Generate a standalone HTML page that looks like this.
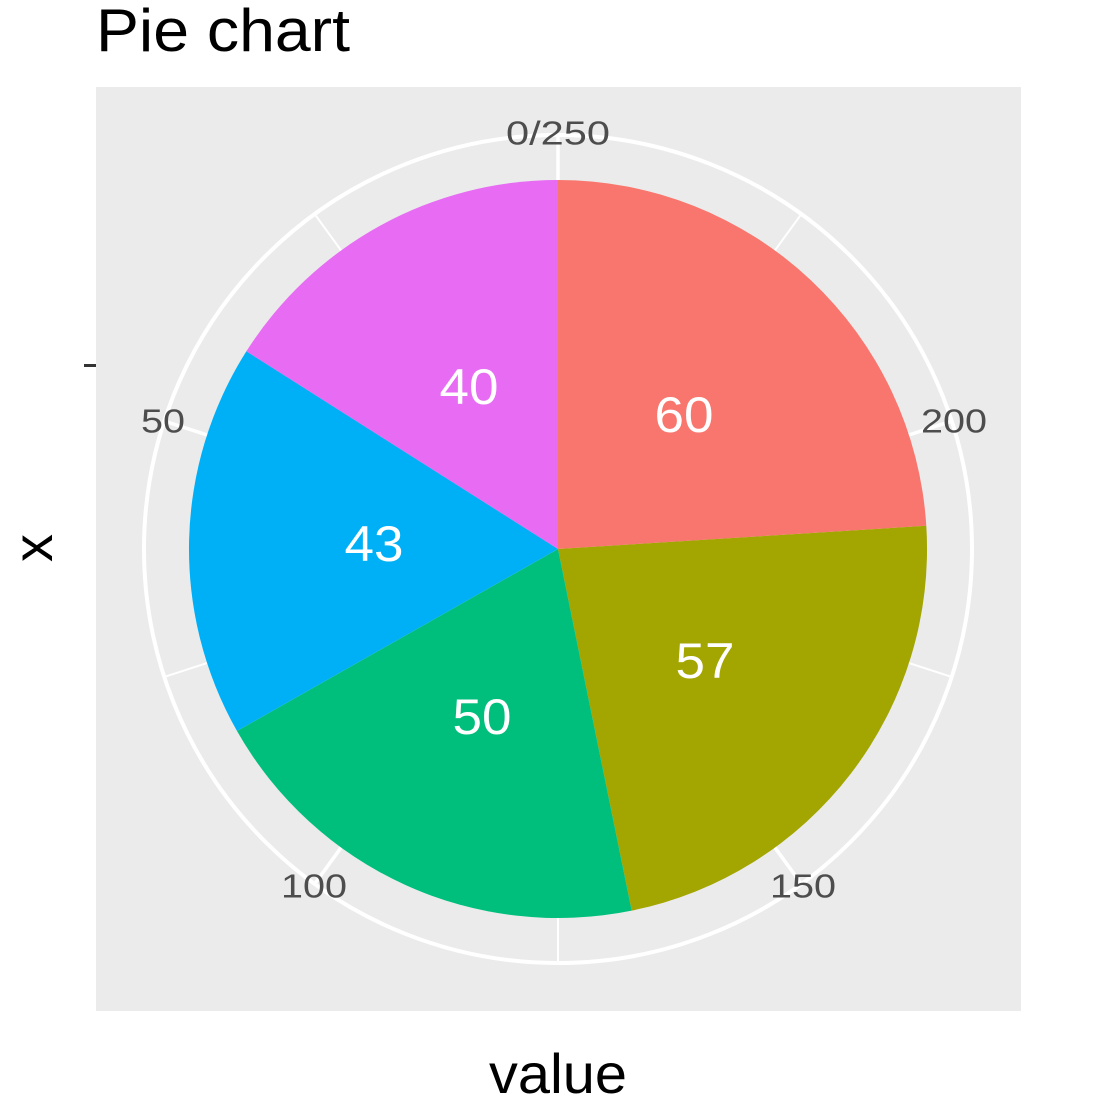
<!DOCTYPE html>
<html><head><meta charset="utf-8"><style>
html,body{margin:0;padding:0;background:#fff;}
svg{display:block;font-family:"Liberation Sans","DejaVu Sans",sans-serif;}
</style></head><body>
<svg width="1103" height="1107" viewBox="0 0 1103 1107" xmlns="http://www.w3.org/2000/svg">
<rect width="1103" height="1107" fill="#fff"/>
<text x="96" y="51" font-size="60" textLength="254" lengthAdjust="spacingAndGlyphs" fill="#000">Pie chart</text>
<rect x="96" y="87" width="925" height="924" fill="#ebebeb"/>
<g stroke="#fff" transform="translate(558,549)">
<g stroke-width="2">
<line x1="0" y1="0" x2="0" y2="-414" transform="rotate(36)"/>
<line x1="0" y1="0" x2="0" y2="-414" transform="rotate(108)"/>
<line x1="0" y1="0" x2="0" y2="-414" transform="rotate(180)"/>
<line x1="0" y1="0" x2="0" y2="-414" transform="rotate(252)"/>
<line x1="0" y1="0" x2="0" y2="-414" transform="rotate(324)"/>
</g>
<g stroke-width="3.5">
<line x1="0" y1="0" x2="0" y2="-414" transform="rotate(0)"/>
<line x1="0" y1="0" x2="0" y2="-414" transform="rotate(72)"/>
<line x1="0" y1="0" x2="0" y2="-414" transform="rotate(144)"/>
<line x1="0" y1="0" x2="0" y2="-414" transform="rotate(216)"/>
<line x1="0" y1="0" x2="0" y2="-414" transform="rotate(288)"/>
</g>
<circle cx="0" cy="0" r="414" fill="none" stroke-width="4"/>
</g>
<path d="M558,549 L558,180 A369,369 0 0 1 926.3,525.8 Z" fill="#F8766D"/>
<path d="M558,549 L926.3,525.8 A369,369 0 0 1 631.7,910.6 Z" fill="#A3A500"/>
<path d="M558,549 L631.7,910.6 A369,369 0 0 1 237.0,731.0 Z" fill="#00BF7D"/>
<path d="M558,549 L237.0,731.0 A369,369 0 0 1 246.4,351.3 Z" fill="#00B0F6"/>
<path d="M558,549 L246.4,351.3 A369,369 0 0 1 558,180 Z" fill="#E76BF3"/>
<g fill="#fff" font-size="50" text-anchor="middle" dominant-baseline="central">
<text x="684" y="415" textLength="59" lengthAdjust="spacingAndGlyphs">60</text>
<text x="705" y="661" textLength="59" lengthAdjust="spacingAndGlyphs">57</text>
<text x="482" y="717" textLength="59" lengthAdjust="spacingAndGlyphs">50</text>
<text x="374" y="544" textLength="59" lengthAdjust="spacingAndGlyphs">43</text>
<text x="469" y="387" textLength="59" lengthAdjust="spacingAndGlyphs">40</text>
</g>
<g fill="#4d4d4d" font-size="33" text-anchor="middle" dominant-baseline="central">
<text x="558" y="133" textLength="104" lengthAdjust="spacingAndGlyphs">0/250</text>
<text x="163" y="421" textLength="44" lengthAdjust="spacingAndGlyphs">50</text>
<text x="314" y="886" textLength="66" lengthAdjust="spacingAndGlyphs">100</text>
<text x="803" y="886" textLength="66" lengthAdjust="spacingAndGlyphs">150</text>
<text x="954" y="421" textLength="66" lengthAdjust="spacingAndGlyphs">200</text>
</g>
<rect x="84" y="364" width="12" height="3" fill="#333"/>
<text x="558" y="1093" font-size="56" text-anchor="middle" textLength="138" lengthAdjust="spacingAndGlyphs" fill="#000">value</text>
<text transform="translate(52,548) rotate(-90)" font-size="56" text-anchor="middle" fill="#000">x</text>
</svg>
</body></html>
